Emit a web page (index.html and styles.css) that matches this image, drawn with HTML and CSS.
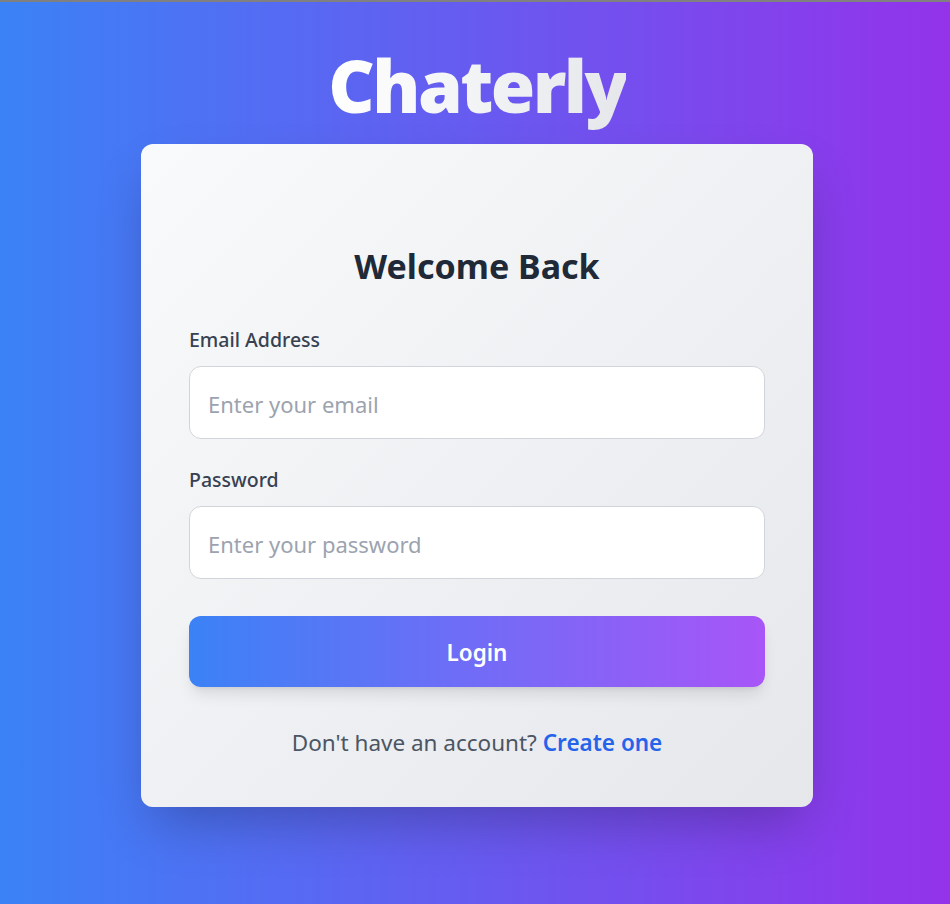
FILE: index.html
```html
<!DOCTYPE html>
<html lang="en">
<head>
<meta charset="utf-8">
<title>Chaterly - Login</title>
<link rel="stylesheet" href="styles.css">
</head>
<body>
<div class="topline"></div>
<main class="page">
  <h1 class="brand">Chaterly</h1>
  <section class="card">
    <h2 class="card-title">Welcome Back</h2>
    <form class="form">
      <div class="field">
        <label class="label" for="email">Email Address</label>
        <input class="input" id="email" type="email" placeholder="Enter your email">
      </div>
      <div class="field">
        <label class="label" for="password">Password</label>
        <input class="input" id="password" type="password" placeholder="Enter your password">
      </div>
      <button class="btn" type="button">Login</button>
    </form>
    <p class="footer">Don't have an account? <a class="link" href="#">Create one</a></p>
  </section>
</main>
</body>
</html>
```
FILE: styles.css
```css
* { box-sizing: border-box; }
html, body { margin: 0; padding: 0; }
body {
  font-family: "Noto Sans", "Open Sans", sans-serif;
  background: linear-gradient(to right, #3b82f6, #9333ea);
  min-height: 904px;
}
.topline { height: 2px; background: #808080; }
.page {
  display: flex;
  flex-direction: column;
  align-items: center;
  padding-top: 35px;
  padding-left: 4px;
}
.brand {
  margin: 0;
  font-size: 72px;
  font-weight: 900;
  line-height: 96px;
  letter-spacing: -2.6px;
  background: linear-gradient(to right, #ffffff, #e5e7eb);
  -webkit-background-clip: text;
  background-clip: text;
  color: transparent;
  margin-bottom: 11px;
}
.card {
  width: 672px;
  padding: 102px 48px 50px;
  border-radius: 12px;
  background: linear-gradient(135deg, #f9fafb, #e5e7eb);
  box-shadow: 0 25px 50px -12px rgba(0,0,0,0.25);
}
.card-title {
  margin: 0 0 42px;
  text-align: center;
  font-size: 34px;
  font-weight: 700;
  line-height: 40px;
  color: #1f2937;
}
.form { display: flex; flex-direction: column; gap: 29px; }
.field { display: flex; flex-direction: column; gap: 14px; }
.label {
  font-size: 19.5px;
  font-weight: 500;
  color: #374151;
  line-height: 24px;
}
.input {
  height: 73px;
  padding: 2px 18px 0;
  font-family: inherit;
  font-size: 22px;
  border: 1px solid #d1d5db;
  border-radius: 12px;
  background: #fff;
  color: #111827;
  outline: none;
}
.input::placeholder { color: #9ca3af; }
.btn {
  margin-top: 8px;
  height: 71px;
  padding-top: 3px;
  border: 0;
  border-radius: 12px;
  background: linear-gradient(to right, #3b82f6, #a855f7);
  color: #fff;
  font-family: inherit;
  font-size: 22.5px;
  font-weight: 600;
  box-shadow: 0 10px 15px -3px rgba(0,0,0,0.1), 0 4px 6px -4px rgba(0,0,0,0.1);
  cursor: pointer;
}
.footer {
  margin: 42px 0 0;
  text-align: center;
  font-size: 22.5px;
  line-height: 28px;
  color: #4b5563;
}
.link { color: #2563eb; font-weight: 600; text-decoration: none; }
```
